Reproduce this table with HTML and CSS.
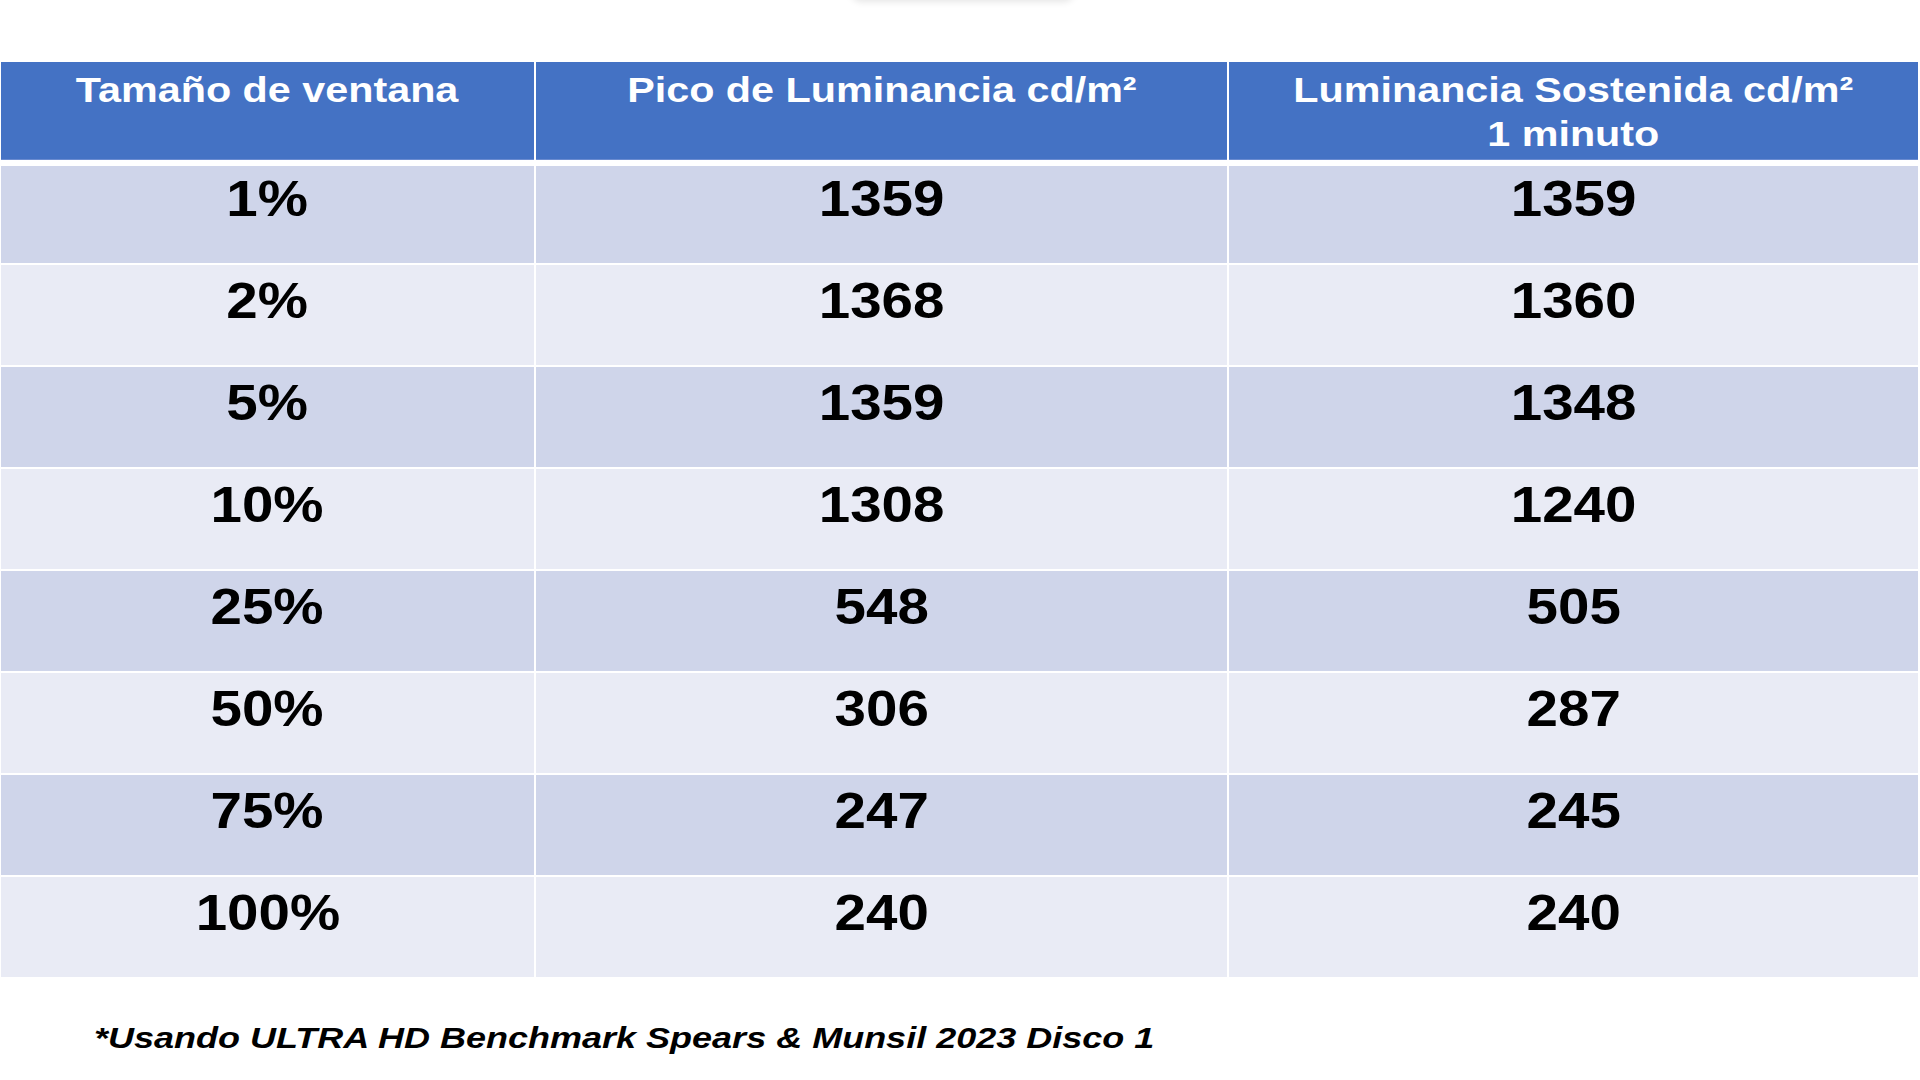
FILE: index.html
```html
<!DOCTYPE html>
<html lang="es">
<head>
<meta charset="utf-8">
<title>Luminancia</title>
<link rel="stylesheet" href="styles.css">
</head>
<body>
<div class="top-shadow"></div>
<main class="slide">
  <div class="table">
    <div class="row head">
      <div class="cell"><span class="tx">Tamaño de ventana</span></div>
      <div class="cell"><span class="tx">Pico de Luminancia cd/m²</span></div>
      <div class="cell"><span class="tx">Luminancia Sostenida cd/m²<br>1 minuto</span></div>
    </div>
    <div class="row odd first">
      <div class="cell"><span class="tx">1%</span></div>
      <div class="cell"><span class="tx">1359</span></div>
      <div class="cell"><span class="tx">1359</span></div>
    </div>
    <div class="row even">
      <div class="cell"><span class="tx">2%</span></div>
      <div class="cell"><span class="tx">1368</span></div>
      <div class="cell"><span class="tx">1360</span></div>
    </div>
    <div class="row odd">
      <div class="cell"><span class="tx">5%</span></div>
      <div class="cell"><span class="tx">1359</span></div>
      <div class="cell"><span class="tx">1348</span></div>
    </div>
    <div class="row even">
      <div class="cell"><span class="tx">10%</span></div>
      <div class="cell"><span class="tx">1308</span></div>
      <div class="cell"><span class="tx">1240</span></div>
    </div>
    <div class="row odd">
      <div class="cell"><span class="tx">25%</span></div>
      <div class="cell"><span class="tx">548</span></div>
      <div class="cell"><span class="tx">505</span></div>
    </div>
    <div class="row even">
      <div class="cell"><span class="tx">50%</span></div>
      <div class="cell"><span class="tx">306</span></div>
      <div class="cell"><span class="tx">287</span></div>
    </div>
    <div class="row odd">
      <div class="cell"><span class="tx">75%</span></div>
      <div class="cell"><span class="tx">247</span></div>
      <div class="cell"><span class="tx">245</span></div>
    </div>
    <div class="row even">
      <div class="cell"><span class="tx">100%</span></div>
      <div class="cell"><span class="tx">240</span></div>
      <div class="cell"><span class="tx">240</span></div>
    </div>
  </div>
  <p class="note"><span class="note-tx">*Usando ULTRA HD Benchmark Spears &amp; Munsil 2023 Disco 1</span></p>
</main>
</body>
</html>
```

FILE: styles.css
```css
html, body {
  margin: 0;
  padding: 0;
  background: #ffffff;
}

body {
  width: 1920px;
  height: 1080px;
  overflow: hidden;
  position: relative;
  font-family: "Liberation Sans", Arial, sans-serif;
  font-weight: bold;
  color: #000000;
}

.top-shadow {
  position: absolute;
  top: -30px;
  left: 850px;
  width: 225px;
  height: 30px;
  border-radius: 12px;
  box-shadow: 0 2px 7px rgba(0, 0, 0, 0.10);
  background: #ffffff;
}

.slide {
  padding-top: 62px;
}

.table {
  margin-left: 1px;
  width: 1917px;
  display: flex;
  flex-direction: column;
}

.row {
  display: grid;
  grid-template-columns: 533px 691px 1fr;
  column-gap: 2px;
  background: #ffffff;
}

.cell {
  text-align: center;
  overflow: visible;
}

.tx {
  display: inline-block;
  transform: scaleX(1.13);
}

.head {
  height: 98px;
  margin-bottom: 6px;
}

.head .cell {
  background: #4472c4;
  color: #ffffff;
  font-size: 35px;
  line-height: 44px;
  padding-top: 6px;
  box-sizing: border-box;
  border-bottom: 1px solid #6a8bd0;
}

.head .tx {
  transform: scaleX(1.18);
}

.row.odd .cell {
  background: #cfd5ea;
}

.row.even .cell {
  background: #e9ebf5;
}

.row.odd, .row.even {
  height: 102px;
  border-top: 2px solid #ffffff;
  box-sizing: border-box;
}

.row.first {
  height: 97px;
  border-top: 0;
}

.row.odd .cell, .row.even .cell {
  font-size: 50px;
  line-height: 60px;
  padding-top: 6px;
  box-sizing: border-box;
}

.row.first .cell {
  padding-top: 3px;
}

.note {
  margin: 43px 0 0 0;
  padding-left: 94px;
  font-size: 30px;
  line-height: 36px;
  font-style: italic;
}

.note-tx {
  display: inline-block;
  transform: scaleX(1.2);
  transform-origin: left center;
}
```
